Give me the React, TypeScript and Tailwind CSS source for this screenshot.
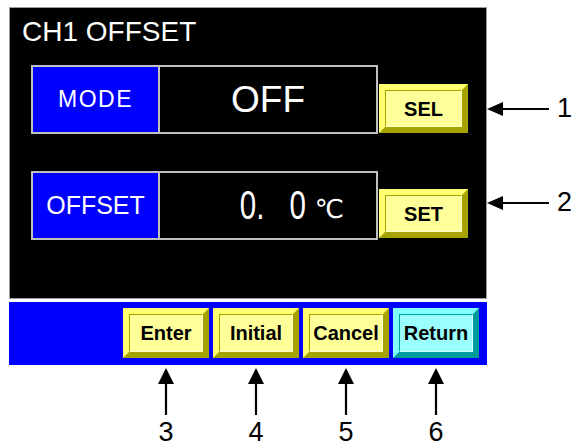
import React from "react";

type BtnProps = { label: string; cyan?: boolean; className?: string };

const PanelButton = ({ label, cyan, className = "" }: BtnProps) => {
    const outer = cyan
        ? "border-t-[#80ffff] border-l-[#80ffff] border-b-[#009c9c] border-r-[#009c9c]"
        : "border-t-[#ffff70] border-l-[#ffff70] border-b-[#a6a200] border-r-[#a6a200]";
    const inner = cyan
        ? "bg-[#99ffff] border-t-[#00a0a0] border-l-[#00a0a0] border-b-[#ccffff] border-r-[#ccffff]"
        : "bg-[#ffff99] border-t-[#a6a200] border-l-[#a6a200] border-b-[#ffffcc] border-r-[#ffffcc]";
    return (
        <div className={`flex border-[6px] ${outer} ${className}`}>
            <div
                className={`flex-1 flex items-center justify-center border ${inner} text-[20px] font-bold text-black leading-none`}
            >
                {label}
            </div>
        </div>
    );
};

const ArrowLeft = () => (
    <svg width="62" height="14" viewBox="0 0 62 14">
        <polygon points="0,7 16,0 16,14" fill="#000" />
        <line x1="15" y1="7" x2="62" y2="7" stroke="#000" strokeWidth="2.2" />
    </svg>
);

const ArrowUp = () => (
    <svg width="16" height="47" viewBox="0 0 16 47">
        <polygon points="8,0 0,16 16,16" fill="#000" />
        <line x1="8" y1="15" x2="8" y2="47" stroke="#000" strokeWidth="2.2" />
    </svg>
);

export default function App() {
    const bottomButtons = [
        { label: "Enter", no: "3" },
        { label: "Initial", no: "4" },
        { label: "Cancel", no: "5" },
        { label: "Return", no: "6", cyan: true },
    ];

    return (
        <div className="w-[579px] h-[446px] bg-white overflow-hidden font-['Liberation_Sans',Arial,sans-serif]">
            <div className="flex pt-[7px] pl-[9px]">
                {/* Screen */}
                <div className="w-[478px] flex flex-col">
                    <div className="h-[292px] bg-black border border-[#9a9a9a] flex flex-col">
                        <div className="pt-[10px] pl-[12px] text-white text-[28px] leading-none">CH1 OFFSET</div>

                        {/* MODE row */}
                        <div className="flex items-end mt-[19px] pl-[21px]">
                            <div className="flex h-[69px] border-2 border-[#c0c0c0]">
                                <div className="w-[125px] bg-[#0000ff] flex items-center justify-center text-white text-[23px] tracking-[1.5px] leading-none">
                                    MODE
                                </div>
                                <div className="w-[2px] bg-[#c0c0c0]" />
                                <div className="w-[216px] flex items-center justify-center text-white text-[37px] leading-none">
                                    OFF
                                </div>
                            </div>
                            <PanelButton label="SEL" className="w-[89px] h-[49px] ml-[1px] mb-[1px]" />
                        </div>

                        {/* OFFSET row */}
                        <div className="flex items-end mt-[37px] pl-[21px]">
                            <div className="flex h-[69px] border-2 border-[#c0c0c0]">
                                <div className="w-[125px] bg-[#0000ff] flex items-center justify-center text-white text-[25px] leading-none">
                                    OFFSET
                                </div>
                                <div className="w-[2px] bg-[#c0c0c0]" />
                                <div className="w-[216px] flex items-center justify-end pr-[34px] text-white leading-none">
                                    <span className="inline-block origin-right scale-x-[0.72] text-[41px]">
                                        0.<span className="ml-[35px]">0</span>
                                    </span>
                                    <span className="text-[26px] ml-[9px] mt-[6px] font-['DejaVu_Sans',sans-serif] tracking-[-2px]">℃</span>
                                </div>
                            </div>
                            <PanelButton label="SET" className="w-[89px] h-[49px] ml-[1px] mb-[2px]" />
                        </div>
                    </div>

                    {/* Key bar */}
                    <div className="mt-[3px] h-[63px] bg-[#0000ff] flex justify-end items-start pt-[6px] pr-[8px] gap-[4px]">
                        {bottomButtons.map((b) => (
                            <PanelButton key={b.label} label={b.label} cyan={b.cyan} className="w-[86px] h-[50px]" />
                        ))}
                    </div>
                </div>

                {/* Right callouts */}
                <div className="flex flex-col">
                    <div className="flex items-center h-[27px] mt-[88px]">
                        <ArrowLeft />
                        <span className="ml-[8px] text-[27px] leading-none text-black">1</span>
                    </div>
                    <div className="flex items-center h-[27px] mt-[67px]">
                        <ArrowLeft />
                        <span className="ml-[8px] text-[27px] leading-none text-black">2</span>
                    </div>
                </div>
            </div>

            {/* Bottom callouts */}
            <div className="w-[478px] ml-[9px] flex justify-end pr-[8px] gap-[4px] mt-[3px]">
                {bottomButtons.map((b) => (
                    <div key={b.no} className="w-[86px] flex flex-col items-center">
                        <ArrowUp />
                        <span className="mt-[4px] text-[27px] leading-none text-black">{b.no}</span>
                    </div>
                ))}
            </div>
        </div>
    );
}
